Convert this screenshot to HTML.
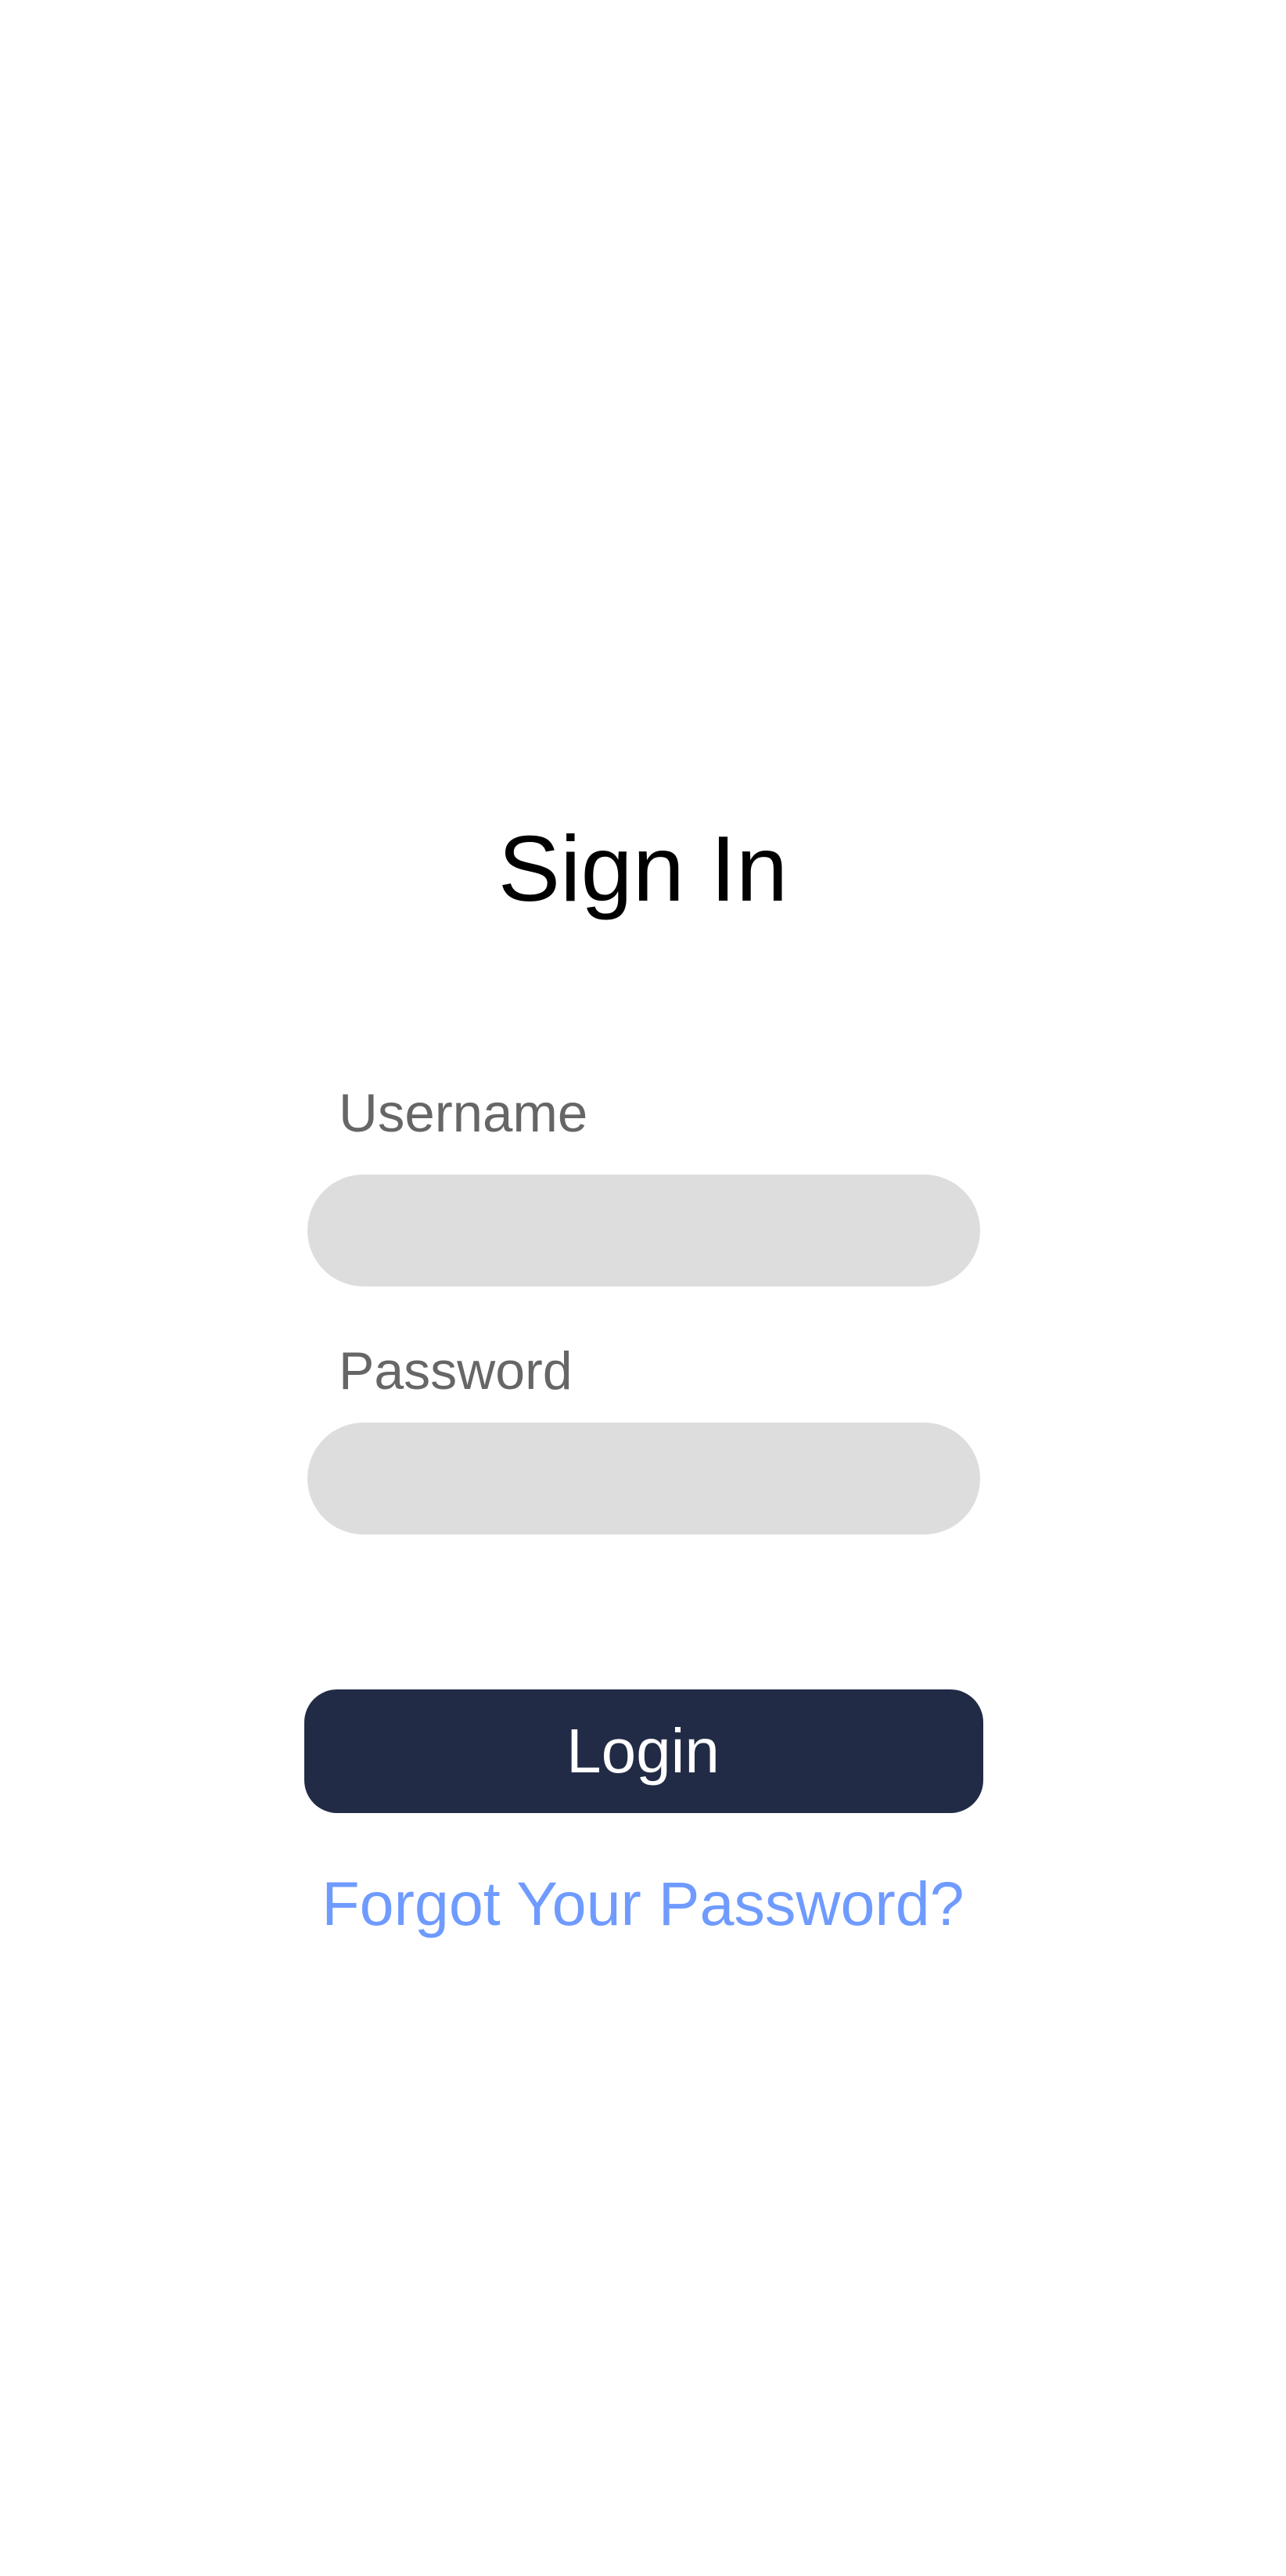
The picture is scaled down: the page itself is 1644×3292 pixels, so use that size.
<!DOCTYPE html>
<html><head><meta charset="utf-8"><style>
html,body{margin:0;padding:0;background:#fff;}
body{width:1644px;height:3292px;position:relative;overflow:hidden;font-family:"Liberation Sans",sans-serif;}
.t{position:absolute;line-height:1;white-space:nowrap;}
.c{left:0;width:1644px;text-align:center;}
.in{position:absolute;left:393px;width:860px;height:143px;border-radius:72px;background:#dddddd;}
</style></head><body>
<div class="t c" style="top:1051px;font-size:119px;color:#000;">Sign In</div>
<div class="t" style="left:433px;top:1388px;font-size:69px;color:#666;">Username</div>
<div class="in" style="top:1501px;"></div>
<div class="t" style="left:433px;top:1718px;font-size:68px;color:#666;">Password</div>
<div class="in" style="top:1818px;"></div>
<div style="position:absolute;left:389px;top:2159px;width:868px;height:158px;border-radius:42px;background:#222b46;"></div>
<div class="t c" style="top:2198px;font-size:80px;color:#fff;">Login</div>
<div class="t c" style="top:2393px;font-size:79px;color:#6f9bff;">Forgot Your Password?</div>
</body></html>
